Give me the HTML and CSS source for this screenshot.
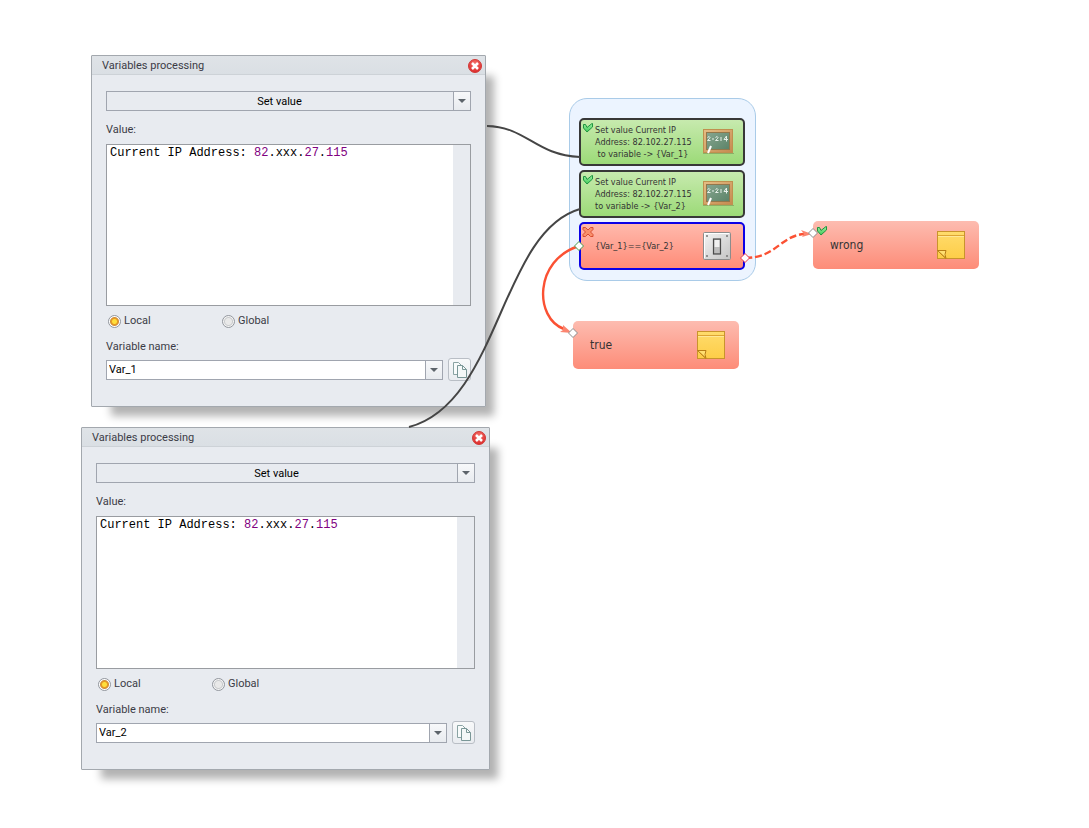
FILE: index.html
```html
<!DOCTYPE html>
<html lang="en">
<head>
<meta charset="utf-8">
<title>Variables processing</title>
<link rel="stylesheet" href="styles.css">
</head>
<body>
<svg class="defs" width="0" height="0" aria-hidden="true">
  <defs>
    <linearGradient id="wood" x1="0" y1="0" x2="1" y2="1"><stop offset="0" stop-color="#e6bd84"/><stop offset="1" stop-color="#c48a50"/></linearGradient>
    <linearGradient id="slate" x1="0" y1="0" x2="1" y2="1"><stop offset="0" stop-color="#86a690"/><stop offset="1" stop-color="#5c8368"/></linearGradient>
    <linearGradient id="paper" x1="0" y1="0" x2="0" y2="1"><stop offset="0" stop-color="#ffdc6c"/><stop offset="1" stop-color="#fdcd48"/></linearGradient>
    <linearGradient id="metal" x1="0" y1="0" x2="1" y2="1"><stop offset="0" stop-color="#f4f4f4"/><stop offset="1" stop-color="#c4c4c4"/></linearGradient>
    <linearGradient id="leaf" x1="0" y1="0" x2="0" y2="1"><stop offset="0" stop-color="#9af0a0"/><stop offset="1" stop-color="#42c95a"/></linearGradient>
    <radialGradient id="red" cx=".5" cy=".3" r=".7"><stop offset="0" stop-color="#f4716a"/><stop offset="1" stop-color="#dc2a2a"/></radialGradient>
  </defs>
  <symbol id="i-board" viewBox="0 0 32 28">
    <rect x="1" y="25" width="31" height="1" fill="#7c8f52" opacity=".6"/>
    <rect x="1.500" y="1.500" width="29" height="23" fill="url(#wood)" stroke="#c0904f"/>
    <rect x="4.500" y="4.500" width="23" height="17" fill="url(#slate)" stroke="#93774a"/>
    <path d="M5.500 9.500q2-2 2.500 0 0 1-2.500 3h3M10 11h2M13.500 9.500q2-2 2.500 0 0 1-2.500 3h3M18 10h2M18 12h2M24.500 13.500V8l-2.500 3.500h4" fill="none" stroke="#e6efe8"/>
    <path d="M6 25l3-7" stroke="#fff" stroke-width="2"/>
  </symbol>
  <symbol id="i-switch" viewBox="0 0 30 30">
    <rect x="1.500" y="1.500" width="27" height="27" rx="1" fill="url(#metal)" stroke="#8c8c8c"/>
    <path d="M2.500 27V2.500H27" fill="none" stroke="#fff"/>
    <g fill="#777"><circle cx="5" cy="5" r="1"/><circle cx="25" cy="5" r="1"/><circle cx="5" cy="25" r="1"/><circle cx="25" cy="25" r="1"/></g>
    <rect x="11.500" y="8" width="7" height="15" fill="#aaa" stroke="#4a4a4a" stroke-width="1.200"/>
    <rect x="12.500" y="9" width="5" height="7" fill="#f0f0f0"/><rect x="12.500" y="16" width="5" height="6" fill="#bdbdbd"/>
  </symbol>
  <symbol id="i-note" viewBox="0 0 30 30">
    <rect x="1.500" y="1.500" width="27" height="27" fill="url(#paper)" stroke="#c9942c"/>
    <path d="M2 5.500h26" stroke="#dda534"/><path d="M2 6.500h26" stroke="#ffe896"/>
    <path d="M1.500 20.500h8.500l-1 4 1 4z" fill="#ffdf70" stroke="#b77d16"/><path d="M2 21l8 7.500" fill="none" stroke="#c28a1c"/>
  </symbol>
  <symbol id="i-check" viewBox="0 0 12 12">
    <path d="M1.500 2.500h2l1.500 3 5-4h.5v3.500L5 10 1.500 6z" fill="url(#leaf)" stroke="#1f9440" stroke-linejoin="round"/>
  </symbol>
  <symbol id="i-cross" viewBox="0 0 12 12">
    <path d="M1 1.500h2.500L6 4l2.500-2.500H11v2L8.500 6 11 8.500v2H8.500L6 8l-2.500 2.500H1v-2L3.500 6 1 3.500z" fill="#f9906c" stroke="#d84d30" stroke-linejoin="round"/>
  </symbol>
  <symbol id="i-close" viewBox="0 0 14 14">
    <circle cx="7" cy="7" r="6.500" fill="url(#red)" stroke="#d03a38"/>
    <path d="M4 4l6 6M10 4l-6 6" stroke="#fff" stroke-width="2.500"/>
  </symbol>
  <symbol id="i-copy" viewBox="0 0 16 18">
    <path d="M1.500 1.500h5l3 3v9h-8z" fill="#f8fbfb" stroke="#8aa3a3"/>
    <path d="M5.500 4.500h5l4 4v8h-9z" fill="#f4f8f8" stroke="#7a9797"/><path d="M10.500 4.500v4h4" fill="none" stroke="#7a9797"/>
  </symbol>
</svg>

<main class="canvas">
  <section class="window window-first" aria-labelledby="title-1">
    <header class="titlebar">
      <h2 class="title" id="title-1">Variables processing</h2>
      <button class="close" type="button" aria-label="Close"><svg width="14" height="14"><use href="#i-close"/></svg></button>
    </header>
    <form class="form">
      <div class="combo">
        <select class="combo-field centered" aria-label="Action"><option>Set value</option></select>
      </div>
      <label class="label value-label" id="value-1">Value:</label>
      <div class="editor">
        <div class="editor-text" role="textbox" aria-multiline="true" aria-labelledby="value-1" contenteditable="true" spellcheck="false">Current IP Address: <span class="num">82</span>.xxx.<span class="num">27</span>.<span class="num">115</span></div>
        <div class="editor-track"></div>
      </div>
      <div class="radios">
        <label class="radio"><input type="radio" name="scope" checked>Local</label>
        <label class="radio"><input type="radio" name="scope">Global</label>
      </div>
      <label class="label" for="var-1">Variable name:</label>
      <div class="name-row">
        <div class="combo combo-white">
          <select class="combo-field" id="var-1"><option>Var_1</option></select>
        </div>
        <button class="copy" type="button" aria-label="Copy"><svg width="16" height="18"><use href="#i-copy"/></svg></button>
      </div>
    </form>
  </section>

  <section class="window window-second" aria-labelledby="title-2">
    <header class="titlebar">
      <h2 class="title" id="title-2">Variables processing</h2>
      <button class="close" type="button" aria-label="Close"><svg width="14" height="14"><use href="#i-close"/></svg></button>
    </header>
    <form class="form">
      <div class="combo">
        <select class="combo-field centered" aria-label="Action"><option>Set value</option></select>
      </div>
      <label class="label value-label" id="value-2">Value:</label>
      <div class="editor editor-short">
        <div class="editor-text" role="textbox" aria-multiline="true" aria-labelledby="value-2" contenteditable="true" spellcheck="false">Current IP Address: <span class="num">82</span>.xxx.<span class="num">27</span>.<span class="num">115</span></div>
        <div class="editor-track"></div>
      </div>
      <div class="radios">
        <label class="radio"><input type="radio" name="scope" checked>Local</label>
        <label class="radio"><input type="radio" name="scope">Global</label>
      </div>
      <label class="label" for="var-2">Variable name:</label>
      <div class="name-row">
        <div class="combo combo-white">
          <select class="combo-field" id="var-2"><option>Var_2</option></select>
        </div>
        <button class="copy" type="button" aria-label="Copy"><svg width="16" height="18"><use href="#i-copy"/></svg></button>
      </div>
    </form>
  </section>

  <section class="group">
    <article class="card card-green">
      <svg class="status" width="12" height="12"><use href="#i-check"/></svg>
      <p class="card-text">Set value Current IP<br>Address: 82.102.27.115<br>&nbsp;to variable -&gt; {Var_1}</p>
      <svg width="32" height="28"><use href="#i-board"/></svg>
    </article>
    <article class="card card-green">
      <svg class="status" width="12" height="12"><use href="#i-check"/></svg>
      <p class="card-text">Set value Current IP<br>Address: 82.102.27.115<br>to variable -&gt; {Var_2}</p>
      <svg width="32" height="28"><use href="#i-board"/></svg>
    </article>
    <article class="card card-red">
      <svg class="status" width="12" height="12"><use href="#i-cross"/></svg>
      <p class="card-text">{Var_1}=={Var_2}</p>
      <svg width="30" height="30"><use href="#i-switch"/></svg>
    </article>
  </section>

  <article class="node node-wrong">
    <svg class="status" width="12" height="12"><use href="#i-check"/></svg>
    <p class="node-text">wrong</p>
    <svg width="30" height="30"><use href="#i-note"/></svg>
  </article>
  <article class="node node-true">
    <p class="node-text">true</p>
    <svg width="30" height="30"><use href="#i-note"/></svg>
  </article>

  <svg class="links" width="1000" height="440" viewBox="0 0 1000 440" fill="none" aria-hidden="true">
    <g stroke="#454545" stroke-width="2">
      <path d="M487 126C527 127 535 155 580 157"/>
      <path d="M409 427C500 403 500 232 580 209"/>
    </g>
    <g stroke="#fb5133" stroke-width="2.400">
      <path d="M579 246C534 260 534 318 564 329"/>
      <path d="M745 258C776 258 780 236 804 234" stroke-dasharray="7 3"/>
    </g>
    <g fill="#fb8570">
      <path d="M563 325l9 8-12-1 3-2z"/>
      <path d="M801 230l11 4-10 3 2-3z"/>
    </g>
    <g fill="#fff">
      <path d="M579 241.500l4.500 4.500-4.500 4.500-4.500-4.500z" stroke="#4a9a4a"/>
      <path d="M745 253.500l4.500 4.500-4.500 4.500-4.500-4.500z" stroke="#e8384a"/>
      <path d="M573 328.500l4.500 4.500-4.500 4.500-4.500-4.500z" stroke="#8d8d8d"/>
      <path d="M813 228.500l4.500 4.500-4.500 4.500-4.500-4.500z" stroke="#8d8d8d"/>
    </g>
  </svg>
</main>
</body>
</html>
```
FILE: styles.css
```css
* { box-sizing: border-box; }

body {
  margin: 0;
  background: #fff;
  color: #3b3b46;
  font: 11px/14px Roboto, "Liberation Sans", sans-serif;
}

svg { display: block; flex: none; }
p, h2 { margin: 0; }
.defs { position: absolute; }

.canvas {
  position: relative;
  min-height: 100vh;
  overflow: hidden;
}

/* Windows on the canvas */
.window {
  position: absolute;
  background: #e8ebf0;
  border: 1px solid #a3a8ae;
  border-radius: 1px;
  box-shadow: 14px 15px 8px -6px rgba(0, 0, 0, .3);
}
.window-first { left: 91px; top: 55px; width: 395px; }
.window-second { left: 81px; top: 427px; width: 409px; }

.titlebar {
  display: flex;
  align-items: center;
  justify-content: space-between;
  height: 19px;
  padding: 1px 3px 0 10px;
  background: linear-gradient(#dfe3e7, #dadfe4);
  border-bottom: 1px solid #cdd2d7;
}
.title { font-size: 11px; font-weight: 400; }
.close {
  padding: 0;
  border: 0;
  background: none;
}

.form {
  display: flex;
  flex-direction: column;
  padding: 16px 14px 25px;
}

.combo {
  position: relative;
  display: flex;
  flex: auto;
  height: 20px;
  border: 1px solid #a0a5af;
}
.combo::before {
  content: "";
  position: absolute;
  inset: 0 0 0 auto;
  width: 16px;
  background: linear-gradient(#f7f8fa, #e8ebef);
  border-left: 1px solid #a0a5af;
  pointer-events: none;
}
.combo::after {
  content: "";
  position: absolute;
  right: 4px;
  top: 7px;
  border: 4px solid transparent;
  border-top-color: #5d646b;
  border-bottom: 0;
  pointer-events: none;
}
.combo-white { background: #fff; }
.combo-field {
  flex: auto;
  appearance: none;
  padding: 1px 19px 0 2px;
  border: 0;
  background: none;
  color: #000;
  font: inherit;
}
.centered { padding: 1px 18px 0 0; text-align-last: center; }

.value-label { margin: 12px 0 7px; }

.editor {
  display: flex;
  height: 162px;
  background: #fff;
  border: 1px solid #999ca1;
}
.editor-short { height: 153px; }
.editor-text {
  flex: auto;
  padding: 1px 3px;
  color: #000;
  font: 12px/14px "Liberation Mono", monospace;
  outline: 0;
}
.editor-track { width: 17px; background: #e8ebf0; }
.num { color: #800080; }

.radios {
  display: flex;
  margin: 8px 0 12px;
  padding-left: 2px;
}
.radio {
  display: flex;
  align-items: center;
  gap: 3px;
  width: 114px;
  height: 14px;
}
.radio input {
  appearance: none;
  width: 13px;
  height: 13px;
  margin: 0;
  border: 1px solid #93979e;
  border-radius: 50%;
  background: radial-gradient(circle, #e9e9e9 0 3px, #c9cbcd 4px, #f3f3f3 5px);
}
.radio input:checked {
  background: radial-gradient(circle at 50% 50%, #ffdf3c 0 2px, #e89a22 3px, #d1903c 4px, #fff 5px);
}

.name-row {
  display: flex;
  align-items: center;
  gap: 5px;
  margin-top: 4px;
}
.copy {
  display: grid;
  place-items: center;
  width: 23px;
  height: 23px;
  padding: 0;
  border: 1px solid #b9bec5;
  border-radius: 3px;
  background: linear-gradient(#f8f9fa, #e9ecf0);
}

/* Scenario blocks */
.group {
  position: absolute;
  left: 569px;
  top: 98px;
  display: grid;
  gap: 4px;
  width: 187px;
  padding: 19px 10px 10px 9px;
  background: #ecf4ff;
  border: 1px solid #a9cbe8;
  border-radius: 18px;
}
.card, .node {
  position: relative;
  display: flex;
  align-items: center;
  justify-content: space-between;
  height: 48px;
  border-radius: 5px;
  color: #333;
}
.card {
  padding: 0 9px 0 14px;
  border: 2px solid #383838;
  font: 9px/12px "DejaVu Sans Condensed", "DejaVu Sans", sans-serif;
}
.card-text { white-space: nowrap; }
.card-green { background: linear-gradient(#c7eaae, #9cda78); }
.card-red {
  padding-right: 11px;
  border-color: #0b00e6;
  background: linear-gradient(#ffb9ac, #ff8c78);
}
.status {
  position: absolute;
  left: 1px;
  top: 2px;
}

.node {
  position: absolute;
  width: 166px;
  padding: 0 13px 0 17px;
  background: linear-gradient(#fdbcb0, #fd8c78);
  font: 12px/16px "DejaVu Sans Condensed", "DejaVu Sans", sans-serif;
}
.node-wrong { left: 813px; top: 221px; }
.node-true { left: 573px; top: 321px; }
.node .status { left: 3px; top: 4px; }

.links {
  position: absolute;
  left: 0;
  top: 0;
  pointer-events: none;
}
```
